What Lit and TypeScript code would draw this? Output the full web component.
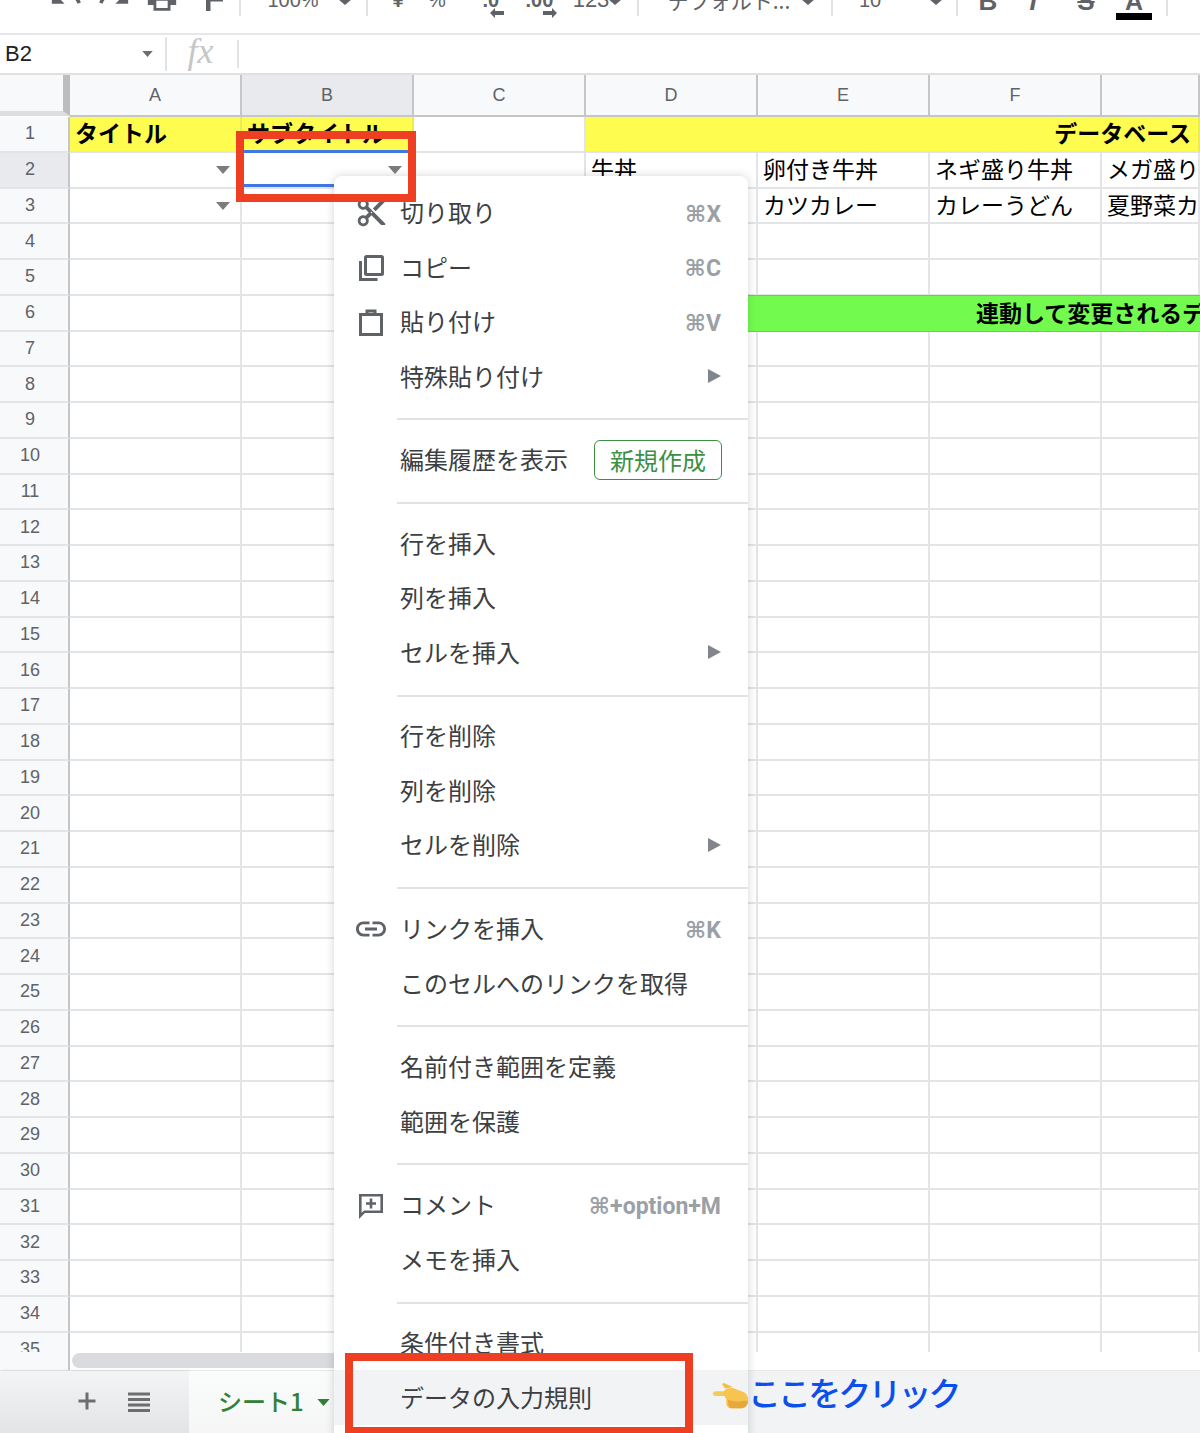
import { LitElement, html, css, nothing } from "lit";
import { customElement } from "lit/decorators.js";

const P = {
  undo: "M12.5 8c-2.65 0-5.05.99-6.9 2.6L2 7v9h9l-3.62-3.62c1.39-1.16 3.16-1.88 5.12-1.88 3.54 0 6.55 2.31 7.6 5.5l2.37-.78C21.08 11.03 17.15 8 12.5 8z",
  redo: "M18.4 10.6C16.55 8.99 14.15 8 11.5 8c-4.65 0-8.58 3.03-9.96 7.22L3.9 16c1.05-3.19 4.05-5.5 7.6-5.5 1.95 0 3.73.72 5.12 1.88L13 16h9V7l-3.6 3.6z",
  print: "M19 8H5c-1.66 0-3 1.34-3 3v6h4v4h12v-4h4v-6c0-1.66-1.34-3-3-3zm-3 11H8v-5h8v5zm3-7c-.55 0-1-.45-1-1s.45-1 1-1 1 .45 1 1-.45 1-1 1zm-1-9H6v4h12V3z",
  cut: "M9.64 7.64c.23-.5.36-1.05.36-1.64 0-2.21-1.79-4-4-4S2 3.79 2 6s1.79 4 4 4c.59 0 1.14-.13 1.64-.36L10 12l-2.36 2.36C7.14 14.13 6.59 14 6 14c-2.21 0-4 1.79-4 4s1.79 4 4 4 4-1.79 4-4c0-.59-.13-1.14-.36-1.64L12 14l7 7h3v-1L9.64 7.64zM6 8c-1.1 0-2-.89-2-2s.9-2 2-2 2 .89 2 2-.9 2-2 2zm0 12c-1.1 0-2-.89-2-2s.9-2 2-2 2 .89 2 2-.9 2-2 2zm6-7.5c-.28 0-.5-.22-.5-.5s.22-.5.5-.5.5.22.5.5-.22.5-.5.5zM19 3l-6 6 2 2 7-7V3z",
  link: "M3.9 12c0-1.71 1.39-3.1 3.1-3.1h4V7H7c-2.76 0-5 2.24-5 5s2.24 5 5 5h4v-1.9H7c-1.71 0-3.1-1.39-3.1-3.1zM8 13h8v-2H8v2zm9-6h-4v1.9h4c1.71 0 3.1 1.39 3.1 3.1s-1.39 3.1-3.1 3.1h-4V17h4c2.76 0 5-2.24 5-5s-2.24-5-5-5z",
};

const icons: Record<string, unknown> = {
  cut: html`<svg class="mi sm" viewBox="0 0 24 24"><path d=${P.cut} fill="currentColor"></path></svg>`,
  link: html`<svg class="mi" viewBox="0 0 24 24"><path d=${P.link} fill="currentColor"></path></svg>`,
  copy: html`<svg class="mi" viewBox="0 0 36 36" fill="none" stroke="currentColor" stroke-width="3">
    <rect x="12.5" y="7.5" width="17" height="18" rx="1"></rect>
    <path d="M7.5 12v18.5h17"></path></svg>`,
  paste: html`<svg class="mi" viewBox="0 0 36 36" fill="none" stroke="currentColor" stroke-width="3">
    <rect x="7.5" y="10.5" width="21" height="20"></rect>
    <path d="M14 10V7h8v3"></path></svg>`,
  comment: html`<svg class="mi" viewBox="0 0 36 36" fill="none" stroke="currentColor" stroke-width="2.6">
    <path d="M7.3 8.3h21.4v16.4H11.5l-4.2 4.2z"></path>
    <path d="M18 11.5v10M13 16.5h10"></path></svg>`,
};

type Entry =
  | { sep: true }
  | { t: string; ic?: string; sc?: string; sub?: boolean; badge?: string; hover?: boolean };

const MENU: Entry[] = [
  { t: "切り取り", ic: "cut", sc: "⌘X" },
  { t: "コピー", ic: "copy", sc: "⌘C" },
  { t: "貼り付け", ic: "paste", sc: "⌘V" },
  { t: "特殊貼り付け", sub: true },
  { sep: true },
  { t: "編集履歴を表示", badge: "新規作成" },
  { sep: true },
  { t: "行を挿入" },
  { t: "列を挿入" },
  { t: "セルを挿入", sub: true },
  { sep: true },
  { t: "行を削除" },
  { t: "列を削除" },
  { t: "セルを削除", sub: true },
  { sep: true },
  { t: "リンクを挿入", ic: "link", sc: "⌘K" },
  { t: "このセルへのリンクを取得" },
  { sep: true },
  { t: "名前付き範囲を定義" },
  { t: "範囲を保護" },
  { sep: true },
  { t: "コメント", ic: "comment", sc: "⌘+option+M" },
  { t: "メモを挿入" },
  { sep: true },
  { t: "条件付き書式" },
  { t: "データの入力規則", hover: true },
];

const caret = html`<svg class="caret" viewBox="0 0 14 8"><path d="M0 0h14L7 8z" fill="currentColor"></path></svg>`;

const tbCaret = html`<svg class="tb-caret" viewBox="0 0 14 12"><path d="M7 0l7 6-7 6-7-6z" fill="currentColor"></path></svg>`;
const tbSep = html`<div class="tb-sep"></div>`;
const tbText = (s: string, extra = "") => html`<span class="tb-txt ${extra}">${s}</span>`;
const tbIcon = (d: string) => html`<svg class="tb-ic" viewBox="0 0 24 24"><path d=${d} fill="currentColor"></path></svg>`;
const arrowL = html`<svg class="tb-arrow" viewBox="0 0 14 10"><path d="M0 5l5-5v3h9v4H5v3z" fill="currentColor"></path></svg>`;
const arrowR = html`<svg class="tb-arrow r" viewBox="0 0 14 10"><path d="M14 5L9 0v3H0v4h9v3z" fill="currentColor"></path></svg>`;

const TOOLBAR: [number, unknown][] = [
  [66, tbIcon(P.undo)],
  [114, tbIcon(P.redo)],
  [162, tbIcon(P.print)],
  [214, html`<svg class="tb-paint" viewBox="0 0 17 12"><path d="M0 0h17v2.500H4.500V12H0z" fill="currentColor"></path></svg>`],
  [240, tbSep],
  [293, tbText("100%")],
  [345, tbCaret],
  [367, tbSep],
  [398, tbText("¥", "b")],
  [437, tbText("%")],
  [493, html`<div class="tb-dec">${tbText(".0", "b")}${arrowL}</div>`],
  [541, html`<div class="tb-dec">${tbText(".00", "b")}${arrowR}</div>`],
  [591, tbText("123", "lg")],
  [615, tbCaret],
  [638, tbSep],
  [729, tbText("デフォルト...", "jp")],
  [808, tbCaret],
  [832, tbSep],
  [870, tbText("10")],
  [936, tbCaret],
  [957, tbSep],
  [988, tbText("B", "fmt")],
  [1033, tbText("I", "fmt it")],
  [1086, tbText("S", "fmt st")],
  [1134, html`<div class="tb-color">${tbText("A", "fmt2")}<div class="tb-bar"></div></div>`],
  [1167, tbSep],
  [1190, tbText("⋯", "more")],
];

const COLS = ["A", "B", "C", "D", "E", "F", ""];
const CELLS: Record<string, string> = {
  "2D": "牛丼",
  "2E": "卵付き牛丼",
  "2F": "ネギ盛り牛丼",
  "2G": "メガ盛り牛丼",
  "3D": "カレー",
  "3E": "カツカレー",
  "3F": "カレーうどん",
  "3G": "夏野菜カレー",
};

@customElement("app-root")
export class AppRoot extends LitElement {
  static styles = css`
    :host {
      display: flex;
      flex-direction: column;
      position: relative;
      width: 1200px;
      height: 1433px;
      overflow: hidden;
      background: #fff;
      font-family: "Noto Sans CJK JP", "Liberation Sans", sans-serif;
      color: #000;
    }
    /* toolbar */
    .toolbar { display: flex; height: 33px; flex: none; overflow: hidden; border-bottom: 2px solid #e6e7ea; box-sizing: content-box; color: #5f6368; }
    .tb-item { width: 0; height: 33px; flex: none; display: flex; justify-content: center; align-items: flex-end; }
    .tb-sep { width: 2px; height: 16px; background: #dfe1e4; align-self: flex-start; flex: none; }
    .tb-txt { font: 20px/24px "Liberation Sans", sans-serif; margin-bottom: 21px; white-space: nowrap; color: #5f6368; flex: none; }
    .tb-txt.b { font-weight: 700; }
    .tb-txt.lg { font-size: 22px; }
    .tb-txt.jp { font-family: "Noto Sans CJK JP", sans-serif; font-size: 21px; }
    .tb-txt.fmt { font: 700 26px/30px "Liberation Sans", sans-serif; margin-bottom: 17px; }
    .tb-txt.it { font-style: italic; }
    .tb-txt.st { text-decoration: line-through; }
    .tb-txt.fmt2 { font: 700 25px/30px "Liberation Sans", sans-serif; margin-bottom: -3px; }
    .tb-txt.more { font-size: 24px; margin-bottom: 26px; }
    .tb-caret { width: 14px; height: 12px; margin-bottom: 28px; flex: none; }
    .tb-ic { width: 34px; height: 34px; margin-bottom: 18px; flex: none; }
    .tb-paint { width: 17px; height: 12px; margin-bottom: 22px; flex: none; }
    .tb-dec { display: flex; flex-direction: column; align-items: flex-start; margin-bottom: 15px; flex: none; }
    .tb-dec .tb-txt { margin-bottom: -4px; }
    .tb-arrow { width: 14px; height: 10px; margin-left: 7px; }
    .tb-arrow.r { margin-left: 17px; }
    .tb-color { display: flex; flex-direction: column; align-items: center; margin-bottom: 13px; flex: none; }
    .tb-bar { width: 36px; height: 7px; background: #000; }

    /* formula bar */
    .formula { height: 38px; flex: none; display: flex; align-items: center; border-bottom: 2px solid #dfe0e2; }
    .namebox { width: 165px; flex: none; display: flex; align-items: center; justify-content: space-between; padding: 0 12px 0 5px; box-sizing: border-box; font: 22px "Liberation Sans", sans-serif; color: #202124; }
    .namebox .caret { width: 11px; height: 6px; color: #6d6d6d; }
    .fsep { width: 2px; height: 34px; background: #e2e3e5; flex: none; }
    .fsep.short { height: 28px; }
    .fx { width: 70px; height: 38px; flex: none; padding-right: 3px; box-sizing: border-box; text-align: center; font: italic 36px/32px "Liberation Serif", serif; color: #c4c6c8; }

    /* headers */
    .colhead { height: 42px; flex: none; display: grid; grid-template-columns: 70px repeat(6, 172px) 98px; }
    .corner { background: #f8f9fa; border-right: 7px solid #bdbdbd; border-bottom: 5px solid #dedede; box-sizing: border-box; margin-bottom: 1px; }
    .ch { display: flex; align-items: center; justify-content: center; padding-top: 1px; font: 18px "Liberation Sans", sans-serif; color: #5f6368; background: #f8f9fa; border-right: 2px solid #c4c6c8; border-bottom: 2px solid #c4c6c8; box-sizing: border-box; }
    .ch.sel { background: #e8eaed; }

    /* grid */
    .body { height: 1235px; flex: none; overflow: hidden; }
    .grid { display: grid; grid-template-columns: 70px repeat(6, 172px) 98px; grid-auto-rows: 35.76px; }
    .rh { display: flex; align-items: center; justify-content: center; padding-right: 8px; font: 18px "Liberation Sans", sans-serif; color: #5f6368; background: #f8f9fa; border-right: 2px solid #c4c6c8; border-bottom: 2px solid #e3e4e5; box-sizing: border-box; }
    .rh.sel { background: #e8eaed; }
    .c { position: relative; border-right: 2px solid #e3e4e5; border-bottom: 2px solid #e3e4e5; box-sizing: border-box; font-size: 23px; line-height: 33px; padding: 0 5px 2px; white-space: nowrap; overflow: hidden; display: flex; align-items: center; }
    .c.y { background: #fefd4f; font-weight: 700; border-right-color: #ecec50; }
    .c.span { grid-column: span 4; }
    .c.r { justify-content: flex-end; padding-right: 7px; }
    .c.g { background: #72fb4e; font-weight: 700; padding-left: 390px; margin-top: -1px; border-top: 1px solid #5fd840; border-bottom: 1px solid #5fd840; border-right: none; }
    .c .caret { position: absolute; right: 10px; top: 13px; width: 14px; height: 8px; color: #7c7c7c; }

    /* scroller + tabs */
    .scrollrow { height: 18px; flex: none; display: flex; }
    .scrollrow .rhfill { width: 70px; background: #f8f9fa; border-right: 2px solid #c4c6c8; box-sizing: border-box; }
    .thumb { width: 400px; height: 15px; margin: 1px 0 0 2px; background: #d9dbde; border-radius: 8px; }
    .tabs { flex: 1; display: flex; background: #f1f3f4; border-top: 1px solid #e8e9ea; }
    .tabs-left { width: 189px; flex: none; display: flex; align-items: center; justify-content: flex-end; gap: 28px; padding: 0 38px 2px 0; box-sizing: border-box; background: linear-gradient(#f3f4f5, #e3e4e5); color: #6c6e70; box-shadow: 1px 0 3px rgba(0,0,0,.12); }
    .tabs-left svg { width: 24px; height: 24px; flex: none; }
    .tab { width: 160px; flex: none; display: flex; align-items: center; gap: 13px; padding: 0 0 3px 29px; box-sizing: border-box; background: linear-gradient(#fafbfb, #f6f6f6); color: #2f8135; font-size: 24px; font-weight: 500; white-space: nowrap; }
    .tab .caret { width: 13px; height: 7px; margin-top: 4px; }

    /* context menu */
    .menu { position: absolute; left: 334px; top: 176px; width: 414px; height: 1300px; box-sizing: border-box; padding-top: 9.4px; background: #fff; border-radius: 8px 8px 0 0; box-shadow: 0 0 10px rgba(60,64,67,.22); color: #3c4043; }
    .item { height: 54.5px; display: flex; align-items: center; padding: 0 27px 0 19px; box-sizing: border-box; font-size: 24px; white-space: nowrap; }
    .item.hover { background: #f1f3f4; }
    .slot { width: 36px; height: 36px; margin-right: 11px; flex: none; color: #5f6368; display: flex; align-items: center; justify-content: center; }
    .mi { display: block; width: 36px; height: 36px; flex: none; }
    .mi.sm { width: 33px; height: 33px; }
    .label { flex: 1; margin-bottom: 2px; }
    .lab2 { margin-bottom: 2px; }
    .sc { font: 700 23px "Roboto", "DejaVu Sans", sans-serif; color: #9aa0a6; margin-top: 3px; }
    .sub { width: 13px; height: 14px; color: #80868b; }
    .badge { font-size: 24px; line-height: 38px; padding: 0 15px; border: 1.5px solid #3d8f44; border-radius: 6px; color: #3d8f44; margin: 1px 0 0 26px; }
    .msep { height: 29.1px; display: flex; align-items: center; padding: 3px 0 0 63px; box-sizing: border-box; }
    .msep div { flex: 1; height: 2px; background: #e0e2e6; }

    /* annotations */
    .selbar { position: absolute; height: 3px; background: #3f77e6; }
    .sel-top { left: 244px; top: 150px; width: 164px; }
    .sel-bot { left: 244px; top: 184px; width: 90px; }
    .redbox { position: absolute; border: 8px solid #ee3f23; box-sizing: border-box; }
    .box1 { left: 236px; top: 131px; width: 180px; height: 71px; }
    .box2 { left: 345px; top: 1353px; width: 348px; height: 80px; border-bottom-width: 6px; }
    .note { position: absolute; left: 712px; top: 1370px; display: flex; align-items: center; height: 44px; }
    .note svg { width: 36px; height: 28px; flex: none; margin: 9px 0 0 0; }
    .note span { font-size: 33px; line-height: 44px; letter-spacing: -2.9px; color: #0b50ea; font-weight: 500; white-space: nowrap; }
  `;

  private rows() {
    const out: unknown[] = [];
    for (let r = 1; r <= 35; r++) {
      out.push(html`<div class="rh ${r === 2 ? "sel" : ""}">${r}</div>`);
      if (r === 1) {
        out.push(html`<div class="c y">タイトル</div><div class="c y">サブタイトル</div><div class="c"></div>
          <div class="c y span r">データベース</div>`);
      } else if (r === 6) {
        out.push(html`<div class="c"></div><div class="c"></div><div class="c"></div>
          <div class="c g span">連動して変更されるデータ</div>`);
      } else {
        for (const col of "ABCDEFG") {
          const dd = r <= 3 && col === "A" ? caret : r === 2 && col === "B" ? caret : nothing;
          out.push(html`<div class="c">${CELLS[`${r}${col}`] ?? ""}${dd}</div>`);
        }
      }
    }
    return out;
  }

  private toolbar() {
    return TOOLBAR.map(([x, tpl], i) => {
      const gap = i === 0 ? x : x - TOOLBAR[i - 1][0];
      return html`<div class="tb-item" style="margin-left:${gap}px">${tpl}</div>`;
    });
  }

  private menu() {
    return MENU.map((e) => {
      if ("sep" in e) return html`<div class="msep"><div></div></div>`;
      return html`<div class="item ${e.hover ? "hover" : ""}">
        <div class="slot">${e.ic ? icons[e.ic] : nothing}</div>
        <span class=${e.badge ? "lab2" : "label"}>${e.t}</span>
        ${e.sc ? html`<span class="sc">${e.sc}</span>` : nothing}
        ${e.sub ? html`<svg class="sub" viewBox="0 0 13 14"><path d="M0 0l13 7-13 7z" fill="currentColor"></path></svg>` : nothing}
        ${e.badge ? html`<span class="badge">${e.badge}</span>` : nothing}
      </div>`;
    });
  }

  render() {
    return html`
      <div class="toolbar">${this.toolbar()}</div>
      <div class="formula">
        <div class="namebox">B2 ${caret}</div>
        <div class="fsep"></div>
        <div class="fx">fx</div>
        <div class="fsep short"></div>
      </div>
      <div class="colhead">
        <div class="corner"></div>
        ${COLS.map((c) => html`<div class="ch ${c === "B" ? "sel" : ""}">${c}</div>`)}
      </div>
      <div class="body"><div class="grid">${this.rows()}</div></div>
      <div class="scrollrow"><div class="rhfill"></div><div class="thumb"></div></div>
      <div class="tabs">
        <div class="tabs-left">
          <svg viewBox="0 0 24 24"><path d="M10.500 3.500h3v7h7v3h-7v7h-3v-7h-7v-3h7z" fill="currentColor"></path></svg>
          <svg viewBox="0 0 24 24"><path d="M1 3.500h22v3H1zM1 9h22v3H1zM1 14.500h22v3H1zM1 20h22v3H1z" fill="currentColor"></path></svg>
        </div>
        <div class="tab">シート1 ${caret}</div>
      </div>

      <div class="selbar sel-top"></div>
      <div class="selbar sel-bot"></div>
      <div class="menu">${this.menu()}</div>
      <div class="redbox box1"></div>
      <div class="redbox box2"></div>
      <div class="note">
        <svg viewBox="0 0 38 28">
          <path d="M14 5l-3-4c-1-1 1-2 2-1.500l9 4z" fill="#f3bd46"></path>
          <rect x="1" y="8" width="19" height="5" rx="2.500" fill="#f7c95a"></rect>
          <path d="M13 7c4-3 9-3 13-1l5 2c4 1 7 4 7 8 0 6-3 10-8 10h-9c-4 0-6-3-6-6v-4c-2-2-3-6-2-9z" fill="#f6c44f"></path>
          <path d="M17 17c5 2 11 2 17 1l4 0c0 5-3 8-8 8h-9c-3 0-4-3-4-9z" fill="#e6a83c"></path>
        </svg>
        <span>ここをクリック</span>
      </div>
    `;
  }
}
